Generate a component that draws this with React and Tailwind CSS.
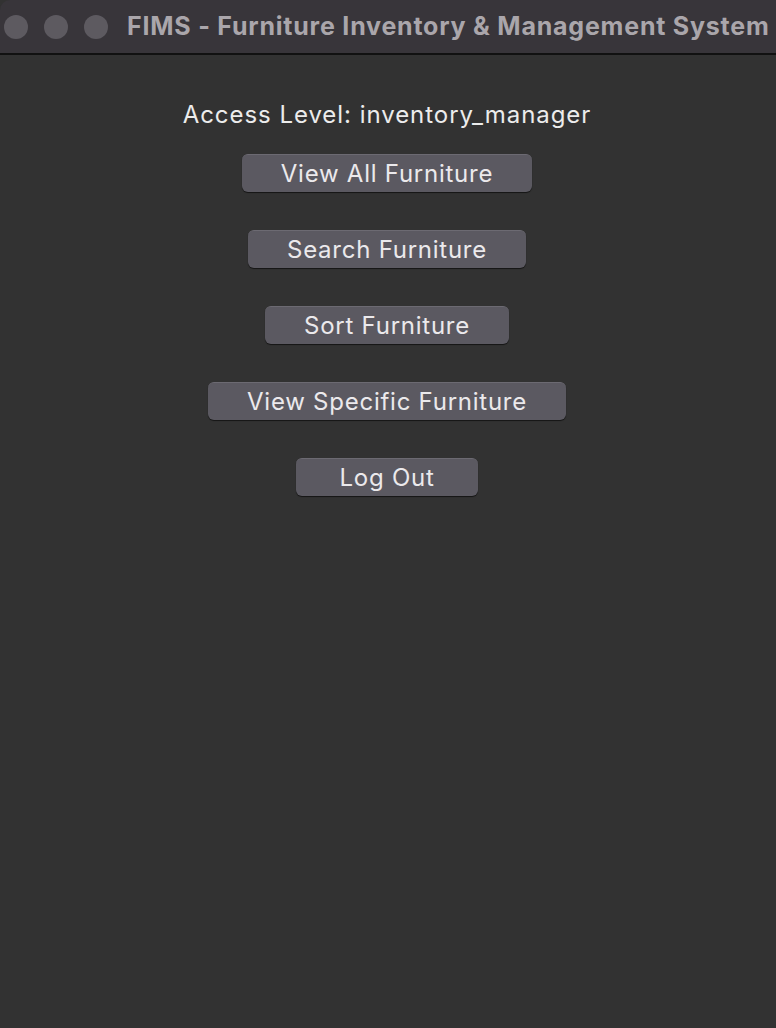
import React from "react";

const actions = [
  "View All Furniture",
  "Search Furniture",
  "Sort Furniture",
  "View Specific Furniture",
  "Log Out",
];

export default function App() {
  return (
    <div
      className="w-[776px] h-[1028px] bg-[#323232] flex flex-col overflow-hidden"
      style={{ fontFamily: "Inter, 'Liberation Sans', sans-serif" }}
    >
      {/* window title bar */}
      <div className="h-[55px] shrink-0 bg-[#38353a] border-b-2 border-[#111] rounded-tl-[10px] flex items-center">
        <div className="flex items-center gap-4 pl-1">
          <span className="w-6 h-6 rounded-full bg-[#5d5a60]" />
          <span className="w-6 h-6 rounded-full bg-[#5d5a60]" />
          <span className="w-6 h-6 rounded-full bg-[#5d5a60]" />
        </div>
        <div className="ml-[19px] text-[25px] font-bold text-[#aaa6ab] whitespace-nowrap tracking-[0.78px]">
          FIMS - Furniture Inventory &amp; Management System
        </div>
      </div>

      <div className="flex flex-col items-center pt-[45px] pr-[2px]">
        <div className="text-[24px] text-[#ececec] leading-[30px] tracking-[0.95px]">
          Access Level: inventory_manager
        </div>
        <div className="flex flex-col items-center gap-[38px] mt-[24px]">
          {actions.map((label) => (
            <button
              key={label}
              type="button"
              className={
                "h-[38px] rounded-[6px] bg-[#5b5961] text-[#ebe9ec] text-[24px] leading-none tracking-[0.75px] shadow-[0_1px_1px_rgba(0,0,0,0.6)] border-t border-[#6c6a72] " +
                (label === "Log Out" ? "px-[43px]" : "px-[39px]")
              }
            >
              {label}
            </button>
          ))}
        </div>
      </div>
    </div>
  );
}
